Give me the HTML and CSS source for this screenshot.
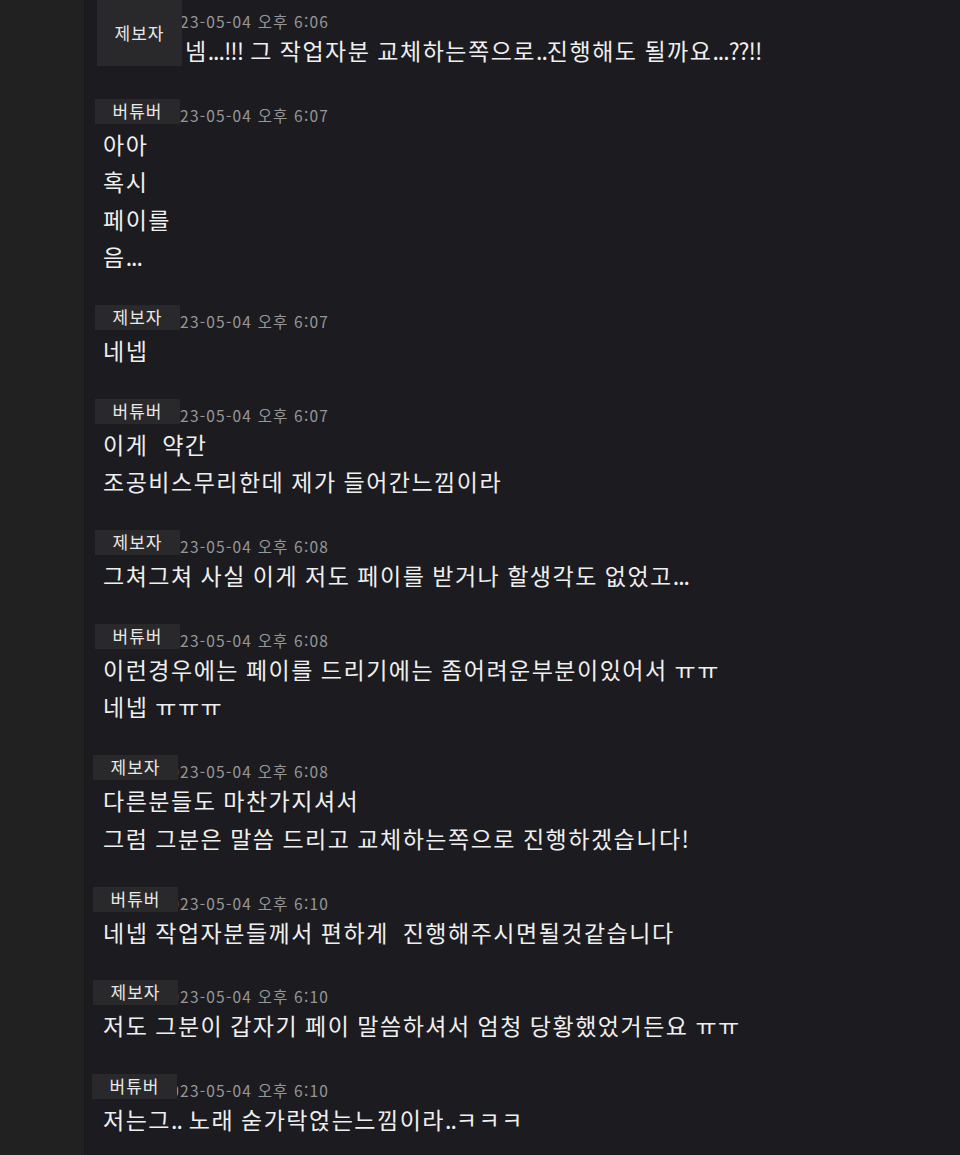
FILE: index.html
```html
<!DOCTYPE html>
<html lang="ko">
<head>
<meta charset="utf-8">
<link rel="stylesheet" href="styles.css">
</head>
<body>
<div class="app">
  <aside class="sidebar"></aside>
  <main class="chat">
    <div class="msg msg-first">
      <span class="mask mask-tall">제보자</span>
      <div class="head"><span class="time">2023-05-04 오후 6:06</span></div>
      <p class="line indent">넴<span class="p">...!!!</span> 그 작업자분 교체하는쪽으로<span class="p">..</span>진행해도 될까요<span class="p">...??!!</span></p>
    </div>
    <div class="msg">
      <span class="mask">버튜버</span>
      <div class="head"><span class="time">2023-05-04 오후 6:07</span></div>
      <p class="line">아아</p>
      <p class="line">혹시</p>
      <p class="line">페이를</p>
      <p class="line">음<span class="p">...</span></p>
    </div>
    <div class="msg">
      <span class="mask">제보자</span>
      <div class="head"><span class="time">2023-05-04 오후 6:07</span></div>
      <p class="line">네넵</p>
    </div>
    <div class="msg">
      <span class="mask">버튜버</span>
      <div class="head"><span class="time">2023-05-04 오후 6:07</span></div>
      <p class="line">이게&nbsp; 약간</p>
      <p class="line">조공비스무리한데 제가 들어간느낌이라</p>
    </div>
    <div class="msg">
      <span class="mask">제보자</span>
      <div class="head"><span class="time">2023-05-04 오후 6:08</span></div>
      <p class="line">그쳐그쳐 사실 이게 저도 페이를 받거나 할생각도 없었고<span class="p">...</span></p>
    </div>
    <div class="msg">
      <span class="mask">버튜버</span>
      <div class="head"><span class="time">2023-05-04 오후 6:08</span></div>
      <p class="line">이런경우에는 페이를 드리기에는 좀어려운부분이있어서 ㅠㅠ</p>
      <p class="line">네넵 ㅠㅠㅠ</p>
    </div>
    <div class="msg">
      <span class="mask mask-left">제보자</span>
      <div class="head"><span class="time">2023-05-04 오후 6:08</span></div>
      <p class="line">다른분들도 마찬가지셔서</p>
      <p class="line">그럼 그분은 말씀 드리고 교체하는쪽으로 진행하겠습니다<span class="p">!</span></p>
    </div>
    <div class="msg">
      <span class="mask mask-left">버튜버</span>
      <div class="head"><span class="time">2023-05-04 오후 6:10</span></div>
      <p class="line">네넵 작업자분들께서 편하게&nbsp; 진행해주시면될것같습니다</p>
    </div>
    <div class="msg">
      <span class="mask mask-left">제보자</span>
      <div class="head"><span class="time">2023-05-04 오후 6:10</span></div>
      <p class="line">저도 그분이 갑자기 페이 말씀하셔서 엄청 당황했었거든요 ㅠㅠ</p>
    </div>
    <div class="msg">
      <span class="mask mask-left2">버튜버</span>
      <div class="head"><span class="time">2023-05-04 오후 6:10</span></div>
      <p class="line">저는그<span class="p">..</span> 노래 숟가락얹는느낌이라<span class="p">..</span>ㅋㅋㅋ</p>
    </div>
  </main>
</div>
</body>
</html>
```
FILE: styles.css
```css
html, body {
  margin: 0;
  padding: 0;
  height: 100%;
  background: #1c1c20;
}
body {
  font-family: "Noto Sans CJK KR", "Noto Sans", sans-serif;
  color: #efefef;
}
.app {
  display: flex;
  width: 960px;
  height: 1155px;
  overflow: hidden;
}
.sidebar {
  width: 84px;
  flex: 0 0 84px;
  background: #212121;
  border-right: 1px solid #18181b;
}
.chat {
  flex: 1;
  background: #1c1c20;
  padding: 5px 0 0 18px;
}
.msg {
  position: relative;
  margin-bottom: 29.3px;
}
.head {
  display: flex;
  height: 27px;
  align-items: flex-start;
}
.time {
  margin-top: 5px;
  margin-left: 57.5px;
  font-size: 15.5px;
  line-height: 22px;
  letter-spacing: 1.2px;
  color: #979797;
}
.line {
  margin: 0;
  font-size: 23px;
  line-height: 37.5px;
  letter-spacing: 1.5px;
  word-spacing: -1px;
  white-space: pre;
}
.p {
  letter-spacing: -1px;
}
.indent {
  padding-left: 82px;
}
.mask {
  position: absolute;
  left: -8px;
  top: 0;
  width: 85px;
  height: 25px;
  background: #29292b;
  color: #e8e8e8;
  font-size: 17px;
  line-height: 24px;
  letter-spacing: 1px;
  text-align: center;
  z-index: 1;
}
.mask-tall {
  left: -6px;
  top: -5px;
  height: 66px;
  line-height: 66px;
}
.mask-left { left: -10px; }
.mask-left2 { left: -11px; }
```
